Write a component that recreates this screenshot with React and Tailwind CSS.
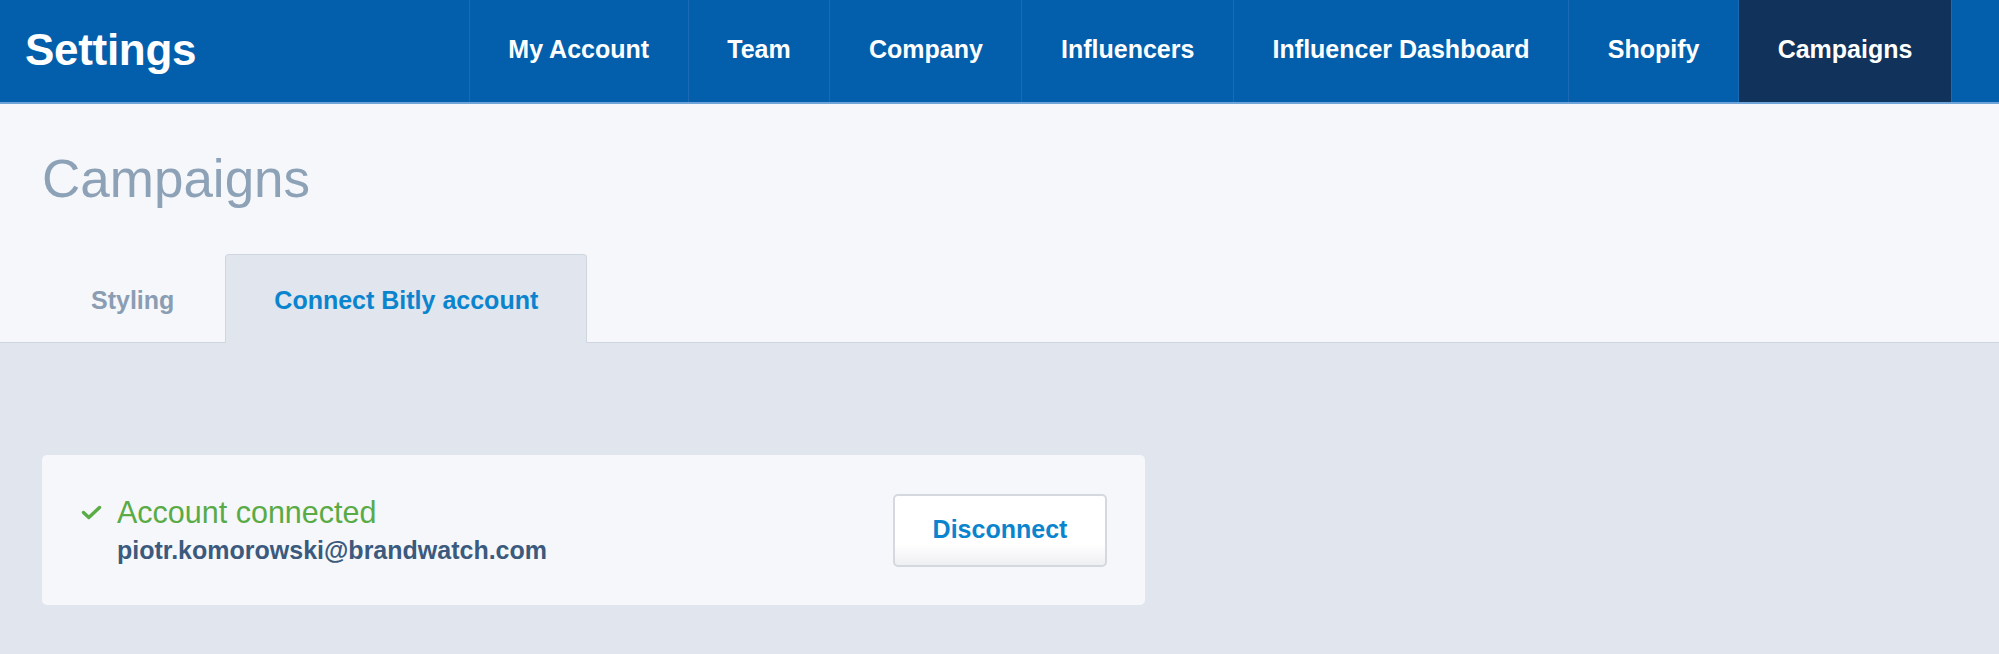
import React from 'react';

const navItems = ['My Account', 'Team', 'Company', 'Influencers', 'Influencer Dashboard', 'Shopify', 'Campaigns'];

function CheckIcon() {
    return (
        <svg width="21" height="15" viewBox="0 0 21 15" className="shrink-0">
            <polyline points="2.5,7.5 7.8,12.5 18.5,2.5" fill="none" stroke="#5aad46" strokeWidth="3.4" strokeLinecap="round" strokeLinejoin="round" />
        </svg>
    );
}

export default function App() {
    const active = 'Campaigns';

    return (
        <div className="min-h-screen flex flex-col bg-[#e0e5ee] font-['Liberation_Sans',Arial,sans-serif]">
            {/* Top bar */}
            <nav className="h-[104px] bg-[#035fac] border-b-2 border-[#6ea4d9] flex items-stretch justify-between text-white">
                <div className="flex items-center pl-[25px] pb-[2px]">
                    <span className="text-[44px] font-bold tracking-[-0.3px]">Settings</span>
                </div>
                <ul className="flex items-stretch pr-[47px]">
                    {navItems.map((item, i) => (
                        <li
                            key={item}
                            className={`flex items-center px-[38.6px] pb-[3px] border-l border-[#1b6bb4] text-[25px] font-bold ${i === navItems.length - 1 ? 'border-r' : ''} ${item === active ? 'bg-[#11325a]' : ''}`}
                        >
                            {item}
                        </li>
                    ))}
                </ul>
            </nav>

            {/* Page header */}
            <div className="bg-[#f5f7fb] border-b border-[#cfd6e0] px-[42px]">
                <h1 className="pt-[48px] text-[53px] leading-none font-light text-[#8ea2b7]">Campaigns</h1>
                <div className="flex items-end gap-[2px] mt-[49px] -mb-px">
                    <button className="h-[89px] px-[48px] pt-[4px] border border-transparent text-[25px] font-bold text-[#8a9db3]">
                        Styling
                    </button>
                    <button className="h-[89px] px-[48px] pt-[4px] border border-b-0 border-[#cfd6e0] rounded-t-[4px] bg-[#e0e5ee] text-[25px] font-bold text-[#0b84ce]">
                        Connect Bitly account
                    </button>
                </div>
            </div>

            {/* Content */}
            <main className="flex-grow px-[42px] pt-[112px]">
                <div className="w-[1103px] h-[150px] bg-[#f5f7fb] rounded-[5px] flex items-center justify-between pl-[39px] pr-[38px]">
                    <div className="flex flex-col">
                        <div className="flex items-center gap-[15px]">
                            <CheckIcon />
                            <span className="text-[30.5px] leading-[36px] text-[#5aab45]">Account connected</span>
                        </div>
                        <span className="pl-[36px] mt-[4px] text-[25px] leading-[32px] font-bold text-[#3b5a7e]">
                            piotr.komorowski@brandwatch.com
                        </span>
                    </div>
                    <button className="w-[214px] h-[73px] border-2 border-[#d5d9df] rounded-[5px] bg-gradient-to-b from-white from-70% to-[#eeeff2] text-[25px] font-bold text-[#0b84ce]">
                        Disconnect
                    </button>
                </div>
            </main>
        </div>
    );
}
